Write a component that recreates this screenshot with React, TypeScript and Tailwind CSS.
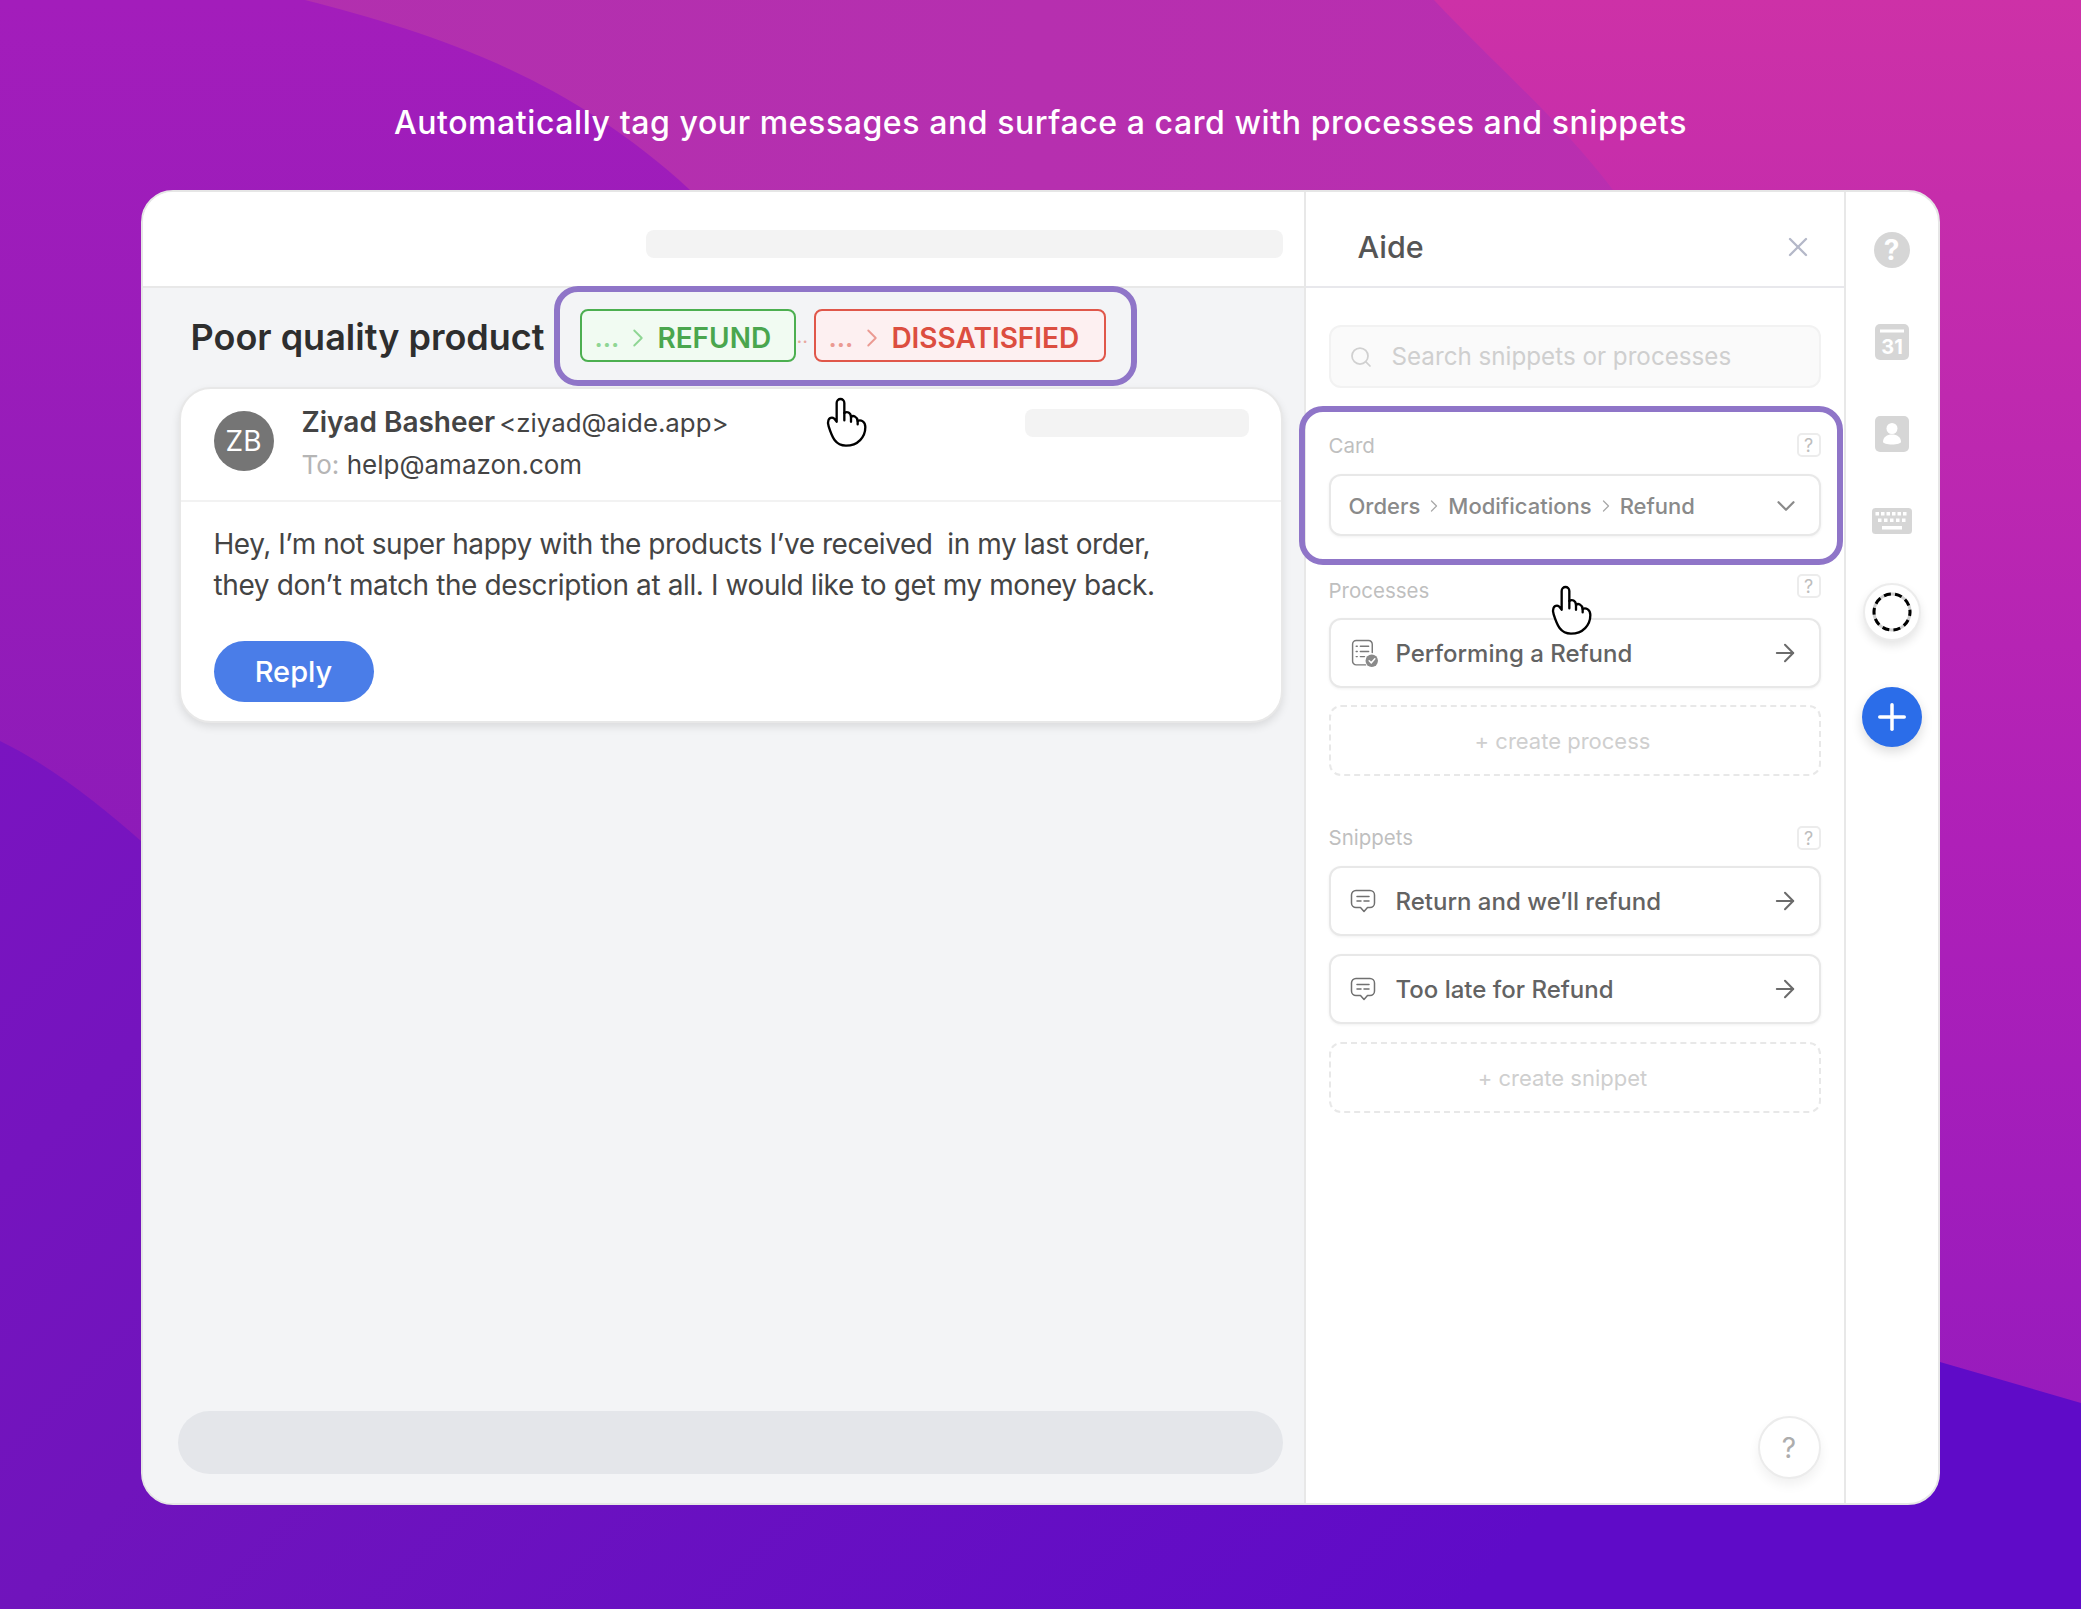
import type { ReactNode } from 'react';
import { ArrowRight, ChevronDown, ChevronRight, Plus, Search, X } from 'lucide-react';

function Hand({ className }: { className: string }) {
  return (
    <svg viewBox="75 54 126 153" className={className} fill="white" stroke="black" strokeWidth="7" strokeLinejoin="round" strokeLinecap="round">
      <path d="M110 128V72c0-16 23-16 23 0v30c8-6 19-2 20 12c6-6 18-2 20 12c8-5 23 0 23 18c0 30-22 56-58 56c-32 0-42-26-52-58c-5-15 0-26 10-26c7 0 10 6 14 12z" />
      <path d="M133 102v22M153 114v14M173 126v10" fill="none" />
    </svg>
  );
}

function HelpBadge() {
  return (
    <span className="flex h-[24px] w-[24px] items-center justify-center rounded-[5px] border-2 border-[#ececec] text-[18px] text-[#bdbdbd]">?</span>
  );
}

function Label({ title, offset }: { title: string; offset: string }) {
  return (
    <div className="flex h-[24px] items-center justify-between">
      <span className={`text-[20.5px] text-[#bfbfbf] ${offset}`}>{title}</span>
      <HelpBadge />
    </div>
  );
}

function ActionRow({ title, icon }: { title: string; icon: ReactNode }) {
  return (
    <div className="flex h-[70px] items-center rounded-[12px] border-2 border-[#e8e8e8] bg-white pl-[19px] pr-[20px] shadow-[0_1px_3px_rgba(0,0,0,0.06)]">
      <span className="w-[26px] shrink-0">{icon}</span>
      <span className="ml-[20px] pt-[1px] text-[24px] font-medium text-[#636363]">{title}</span>
      <ArrowRight className="ml-auto size-[28px] text-[#6b6b6b]" strokeWidth={1.75} />
    </div>
  );
}

function CreateRow({ title }: { title: string }) {
  return (
    <div className="flex h-[71px] items-center justify-center rounded-[12px] border-2 border-dashed border-[#e8e8e8] pr-[24px] pt-[1px] text-[22px] text-[#cfcfcf]">{title}</div>
  );
}

function ProcessIcon() {
  return (
    <svg viewBox="0 0 28 28" className="size-[29px]" fill="none" stroke="#7a7a7a" strokeWidth="1.4" strokeLinecap="round">
      <path d="M15 25H6a3.5 3.5 0 0 1-3.5-3.5V5A3.5 3.5 0 0 1 6 1.5h12A3.5 3.5 0 0 1 21.5 5v8" />
      <path d="M6 7h1M10 7h8M6 12h1M10 12h8M6 17h1M10 17h4" />
      <circle cx="21" cy="21" r="6" fill="#8a8a8a" stroke="none" />
      <path d="M18.5 21l2 2 3.5-4" stroke="white" />
    </svg>
  );
}

function SnippetIcon() {
  return (
    <svg viewBox="0 0 26 24" className="h-[24px] w-[26px]" fill="none" stroke="#707070" strokeWidth="1.5" strokeLinecap="round" strokeLinejoin="round">
      <path d="M6 1.5h14a4.5 4.5 0 0 1 4.5 4.5v8a4.5 4.5 0 0 1-4.5 4.5h-2.5L14 22.5l-3.5-4H6A4.5 4.5 0 0 1 1.5 14V6A4.5 4.5 0 0 1 6 1.5z" />
      <path d="M7 7.5h12M7 12h4M14 12h5" />
    </svg>
  );
}

function Rail() {
  return (
    <div className="flex w-[92px] shrink-0 flex-col items-center">
      <span className="mt-[40px] flex size-[36px] items-center justify-center rounded-full bg-[#d6d6d6] text-[28px] font-bold leading-none text-white">?</span>
      <svg viewBox="0 0 34 36" className="mt-[56px] h-[36px] w-[34px]">
        <rect width="34" height="36" rx="5" fill="#d6d6d6" />
        <rect x="5" y="5.5" width="24" height="3" fill="white" />
        <text x="17" y="29.5" textAnchor="middle" fontSize="20" fontWeight="700" fill="white" fontFamily="Inter, sans-serif">31</text>
      </svg>
      <svg viewBox="0 0 34 36" className="mt-[56px] h-[36px] w-[34px]">
        <rect width="34" height="36" rx="5" fill="#d6d6d6" />
        <circle cx="17" cy="12.5" r="5.5" fill="white" />
        <path d="M8 26c0-5 4-7.5 9-7.5s9 2.5 9 7.5c0 1-4 2.5-9 2.5s-9-1.5-9-2.5z" fill="white" />
      </svg>
      <svg viewBox="0 0 40 26" className="mt-[56px] h-[26px] w-[40px]">
        <rect width="40" height="26" rx="3.5" fill="#d6d6d6" />
        <path d="M3.5 4H7V7.5H3.5zM9 4h3.5v3.5H9zM14.5 4H18v3.5h-3.500zM20 4h3.5v3.5H20zM25.5 4H29v3.5h-3.500zM31 4h3.500v3.500H31zM6 10.500h3.500V14H6zM12 10.500h3.500V14H12zM18 10.500h3.500V14H18zM24 10.500h3.500V14H24zM30 10.500h3.500V14H30zM10 18h20v3.500H10z" fill="white" />
      </svg>
      <div className="mt-[49px] flex size-[58px] items-center justify-center rounded-full border-2 border-[#ececec] bg-white shadow-[0_5px_10px_rgba(0,0,0,0.1)]">
        <svg viewBox="0 0 40 40" className="size-[40px]" fill="none" strokeWidth="3">
          <circle cx="20" cy="20" r="18" stroke="#cfcfcf" />
          <circle cx="20" cy="20" r="18" stroke="black" strokeDasharray="7 4.3" strokeDashoffset="3" />
        </svg>
      </div>
      <div className="mt-[46px] flex size-[60px] items-center justify-center rounded-full bg-[#2b6de9] shadow-[0_5px_12px_rgba(0,0,0,0.14)]">
        <Plus className="size-[42px] text-white" strokeWidth={2} />
      </div>
    </div>
  );
}

function AidePanel() {
  return (
    <div className="relative flex w-[542px] shrink-0 flex-col border-x-2 border-[#e8e8e8]">
      <div className="flex h-[96px] shrink-0 items-center justify-between border-b-2 border-[#e8e8ec] pl-[52px] pr-[30px] pt-[16px]">
        <span className="text-[30.5px] font-medium text-[#555555]">Aide</span>
        <X className="size-[32px] text-[#b4b8c8]" strokeWidth={1.75} />
      </div>
      <div className="flex flex-col pl-[23px] pr-[23px]">
        <div className="mt-[37px] flex h-[63px] items-center rounded-[12px] border-2 border-[#f2f2f2] bg-[#fafafa] pl-[18px]">
          <Search className="size-[24px] text-[#d0d0d0]" strokeWidth={1.75} />
          <span className="ml-[19px] pt-[2px] text-[24.2px] text-[#cfcfcf]">Search snippets or processes</span>
        </div>
        <div className="mt-[45px]"><Label title="Card" offset="mt-[2px]" /></div>
        <div className="mt-[17px] flex h-[62px] items-center rounded-[12px] border-2 border-[#e8e8e8] bg-white pl-[18px] pr-[18px] pt-[2px] text-[22px] font-medium text-[#8a8a8a] shadow-[0_1px_3px_rgba(0,0,0,0.06)]">
          <span>Orders</span>
          <ChevronRight className="mx-[4px] size-[20px] text-[#a8a8a8]" strokeWidth={1.5} />
          <span>Modifications</span>
          <ChevronRight className="mx-[4px] size-[20px] text-[#a8a8a8]" strokeWidth={1.5} />
          <span>Refund</span>
          <ChevronDown className="ml-auto size-[30px] text-[#8a8a8a]" strokeWidth={1.75} />
        </div>
        <div className="mt-[38px]"><Label title="Processes" offset="mt-[10px]" /></div>
        <div className="mt-[20px]"><ActionRow title="Performing a Refund" icon={<ProcessIcon />} /></div>
        <div className="mt-[17px]"><CreateRow title="+ create process" /></div>
        <div className="mt-[50px]"><Label title="Snippets" offset="mt-0" /></div>
        <div className="mt-[16px]"><ActionRow title="Return and we’ll refund" icon={<SnippetIcon />} /></div>
        <div className="mt-[18px]"><ActionRow title="Too late for Refund" icon={<SnippetIcon />} /></div>
        <div className="mt-[18px]"><CreateRow title="+ create snippet" /></div>
      </div>
      <div className="absolute bottom-[24px] right-[23px] flex size-[63px] items-center justify-center rounded-full border-2 border-[#ececec] bg-white text-[28px] text-[#adadad] shadow-[0_6px_12px_rgba(0,0,0,0.06)]">?</div>
      <div className="absolute left-[-7px] top-[214px] h-[159px] w-[544px] rounded-[24px] border-[6px] border-[#8f75c8]" />
      <Hand className="absolute left-[244px] top-[392px] h-[53px] w-[42px]" />
    </div>
  );
}

function Tag({ text, border, bg, dots, color, width }: { text: string; border: string; bg: string; dots: string; color: string; width: string }) {
  return (
    <div className={`flex h-[53px] items-center rounded-[8px] border-2 pl-[13px] pt-[4px] text-[28px] font-semibold ${border} ${bg} ${width}`}>
      <span className={`text-[26px] ${dots}`}>...</span>
      <ChevronRight className={`ml-[4px] size-[30px] ${dots}`} strokeWidth={1.5} />
      <span className={`ml-[4px] ${color}`}>{text}</span>
    </div>
  );
}

function MailCard() {
  return (
    <div className="ml-[36px] w-[1104px] rounded-[32px] border-2 border-[#e8e8e8] bg-white shadow-[0_4px_8px_rgba(0,0,0,0.1)]">
      <div className="flex h-[113px] border-b-2 border-[#f2f2f2] pl-[33px]">
        <div className="mt-[22px] flex size-[60px] items-center justify-center rounded-full bg-[#757575] text-[28px] text-white">ZB</div>
        <div className="ml-[28px] mt-[13px] flex flex-col">
          <p className="text-[28px] leading-[40px] text-[#444444]"><span className="font-semibold">Ziyad Basheer</span><span className="ml-[4px] text-[25.8px]">&lt;ziyad@aide.app&gt;</span></p>
          <p className="mt-[2px] text-[26px] leading-[40px] text-[#b5b5b5]">To: <span className="text-[#444444]">help@amazon.com</span></p>
        </div>
        <div className="ml-auto mr-[32px] mt-[20px] h-[28px] w-[224px] rounded-[8px] bg-[#f3f3f3]" />
      </div>
      <div className="pl-[33px] pt-[22px] text-[28px] leading-[41px] tracking-[-0.014em] text-[#444444]">
        <p className="tracking-[-0.016em]">Hey, I’m not super happy with the products I’ve received&nbsp; in my last order,</p>
        <p>they don’t match the description at all. I would like to get my money back.</p>
      </div>
      <div className="ml-[33px] mt-[35px] mb-[19px] flex h-[61px] w-[160px] items-center justify-center rounded-full bg-[#4a7de8] text-[29px] font-medium text-white">Reply</div>
    </div>
  );
}

function MainColumn() {
  return (
    <div className="relative flex w-[1161px] shrink-0 flex-col bg-[#f3f4f6]">
      <div className="flex h-[96px] shrink-0 items-end justify-end border-b-2 border-[#e8e8e8] bg-white pb-[28px] pr-[21px]">
        <div className="h-[28px] w-[637px] rounded-[8px] bg-[#f3f3f3]" />
      </div>
      <div className="flex h-[99px] shrink-0 items-center pb-[2px] pl-[48px]">
        <h1 className="text-[36px] font-semibold text-[#2e2e2e]">Poor quality product</h1>
        <div className="absolute left-[437px] top-[117px] flex items-center">
          <Tag text="REFUND" border="border-[#4caf50]" bg="bg-[#f1fbf2]" dots="text-[#8fd694]" color="text-[#4aa64e]" width="w-[216px]" />
          <span className="mx-[1px] w-[16px] text-[20px] text-[#e9a8a0]">..</span>
          <Tag text="DISSATISFIED" border="border-[#e0574a]" bg="bg-[#fdf0f1]" dots="text-[#eb9a92]" color="text-[#dc4e40]" width="w-[292px]" />
        </div>
      </div>
      <MailCard />
      <div className="mt-auto mb-[29px] ml-[35px] h-[63px] w-[1105px] rounded-full bg-[#e4e6ea]" />
      <div className="absolute left-[411px] top-[94px] h-[100px] w-[583px] rounded-[24px] border-[6px] border-[#8f75c8]" />
      <Hand className="absolute left-[682px] top-[205px] h-[51px] w-[42px]" />
    </div>
  );
}

function Backdrop() {
  return (
    <svg viewBox="0 0 2081 1609" className="absolute inset-0 size-full" preserveAspectRatio="none">
      <defs>
        <linearGradient id="mid" x1="0" y1="0" x2="1" y2="0">
          <stop offset="0" stopColor="#b030ae" />
          <stop offset="1" stopColor="#bc2eb0" />
        </linearGradient>
        <linearGradient id="left" x1="0" y1="0" x2="0" y2="1">
          <stop offset="0" stopColor="#a31dbb" />
          <stop offset="1" stopColor="#8c1bb8" />
        </linearGradient>
        <linearGradient id="hot" x1="0" y1="0" x2="0" y2="1">
          <stop offset="0" stopColor="#cd31a7" />
          <stop offset="0.6" stopColor="#af20b8" />
          <stop offset="1" stopColor="#981bbd" />
        </linearGradient>
        <linearGradient id="deep" x1="0" y1="0" x2="1" y2="0.4">
          <stop offset="0" stopColor="#7a14c0" />
          <stop offset="0.35" stopColor="#7014bc" />
          <stop offset="0.95" stopColor="#5f0bc8" />
        </linearGradient>
      </defs>
      <rect width="2081" height="1609" fill="url(#mid)" />
      <path d="M1434 0H2081V1403H1800C1700 800 1620 230 1613 190C1560 120 1490 60 1434 0z" fill="url(#hot)" />
      <path d="M0 0H305C420 30 560 70 690 190V900H0z" fill="url(#left)" />
      <path d="M0 741C50 765 100 805 141 841C500 1120 1200 1300 1940 1362L2081 1403V1609H0z" fill="url(#deep)" />
    </svg>
  );
}

export default function App() {
  return (
    <div className="relative flex h-[1609px] w-[2081px] flex-col items-center overflow-hidden font-['Inter',sans-serif]">
      <Backdrop />
      <p className="relative mt-[101px] h-[44px] text-[32px] font-[550] leading-[44px] tracking-[0.018em] text-white">Automatically tag your messages and surface a card with processes and snippets</p>
      <div className="relative ml-[-1px] mt-[45px] flex h-[1315px] w-[1799px] overflow-hidden rounded-[32px] border-2 border-[#e6e6e6] bg-white">
        <MainColumn />
        <AidePanel />
        <Rail />
      </div>
    </div>
  );
}
